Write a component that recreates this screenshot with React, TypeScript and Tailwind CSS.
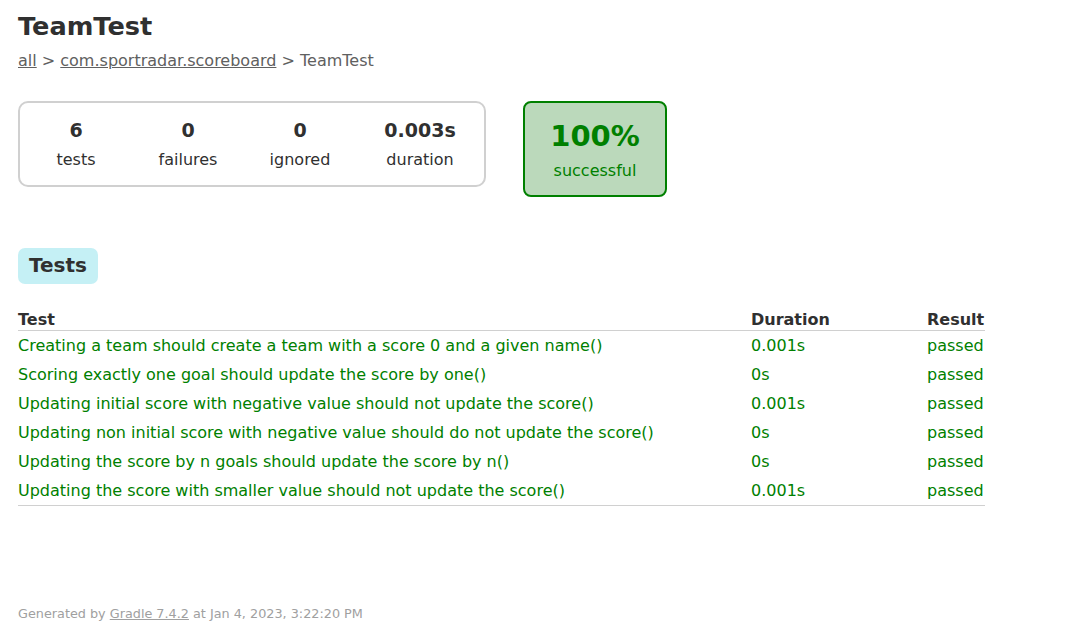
const tests = [
  { name: "Creating a team should create a team with a score 0 and a given name()", duration: "0.001s" },
  { name: "Scoring exactly one goal should update the score by one()", duration: "0s" },
  { name: "Updating initial score with negative value should not update the score()", duration: "0.001s" },
  { name: "Updating non initial score with negative value should do not update the score()", duration: "0s" },
  { name: "Updating the score by n goals should update the score by n()", duration: "0s" },
  { name: "Updating the score with smaller value should not update the score()", duration: "0.001s" },
];

const stats = [
  { value: "6", label: "tests", w: "w-[112px]" },
  { value: "0", label: "failures", w: "w-[112px]" },
  { value: "0", label: "ignored", w: "w-[112px]" },
  { value: "0.003s", label: "duration", w: "w-[128px]" },
];

const App = () => {
  return (
    <div className="min-h-screen bg-white px-[18px] pt-[9px] font-['DejaVu_Sans',sans-serif] text-[16px] text-[#303030]">
      <h1 className="text-[25.6px] font-bold leading-[34px]">TeamTest</h1>
      <div className="mt-[8px] leading-[20px] text-[#606060]">
        <a className="underline">all</a> &gt; <a className="underline">com.sportradar.scoreboard</a> &gt; TeamTest
      </div>

      <div className="mt-[30px] flex items-start">
        <div className="flex rounded-[10px] border-2 border-[#d0d0d0] pt-[14px] pb-[14px]">
          {stats.map((s) => (
            <div key={s.label} className={`${s.w} text-center`}>
              <p className="text-[19px] font-bold leading-[26px]">{s.value}</p>
              <p className="mt-[6px] leading-[22px]">{s.label}</p>
            </div>
          ))}
        </div>
        <div className="ml-[37px] w-[144px] rounded-[8px] border-2 border-[#008000] bg-[#bbd9bb] pt-[14px] pb-[13px] text-center text-[#008000]">
          <p className="text-[29px] font-bold leading-[38px]">100%</p>
          <p className="mt-[5px] leading-[22px]">successful</p>
        </div>
      </div>

      <div className="mt-[51px] flex">
        <div className="rounded-[7px] bg-[#c5f0f5] px-[11px] pt-[4px] pb-[5px] text-[20px] font-bold leading-[27px]">Tests</div>
      </div>

      <table className="mt-[25px] w-[967px] border-collapse">
        <thead>
          <tr className="border-b border-[#d0d0d0]">
            <th className="w-[733px] p-0 text-left font-bold leading-[21px]">Test</th>
            <th className="w-[176px] p-0 text-left font-bold leading-[21px]">Duration</th>
            <th className="p-0 text-left font-bold leading-[21px]">Result</th>
          </tr>
        </thead>
        <tbody className="text-[#008000]">
          {tests.map((t, i) => {
            const last = i === tests.length - 1;
            const cell = last ? "h-[30px] px-0 pt-[2px] pb-[1px]" : "h-[29px] px-0 pt-[2px] pb-0";
            return (
              <tr key={i} className={last ? "border-b border-[#d0d0d0]" : ""}>
                <td className={cell}>{t.name}</td>
                <td className={cell}>{t.duration}</td>
                <td className={cell}>passed</td>
              </tr>
            );
          })}
        </tbody>
      </table>

      <div className="mt-[98px] whitespace-nowrap text-[12.8px] text-[#a0a0a0]">
        Generated by <a className="underline">Gradle 7.4.2</a> at Jan 4, 2023, 3:22:20 PM
      </div>
    </div>
  );
};

export default App;
